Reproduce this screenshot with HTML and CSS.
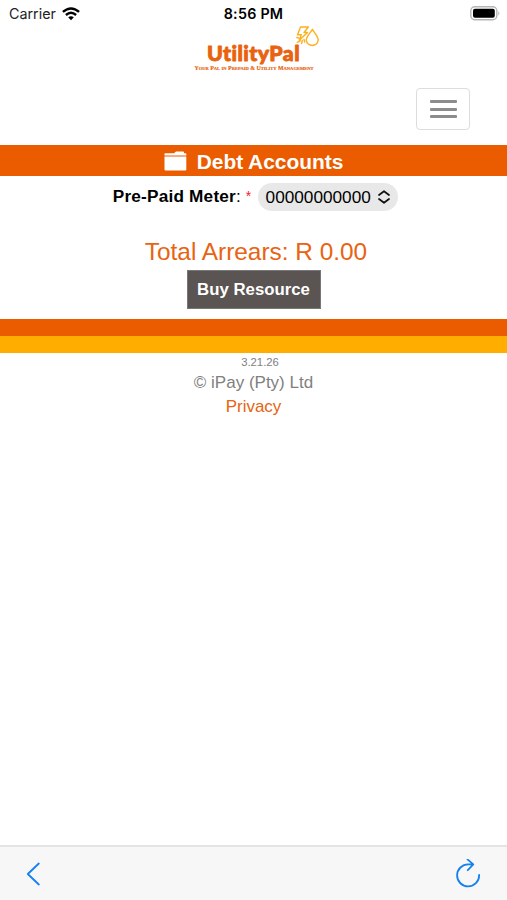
FILE: index.html
```html
<!DOCTYPE html>
<html lang="en">
<head>
<meta charset="utf-8">
<title>UtilityPal - Debt Accounts</title>
<link rel="stylesheet" href="styles.css">
</head>
<body>
<div class="status">
  <div class="carrier"><span>Carrier</span>
    <svg width="18" height="14" viewBox="0 0 18 14" fill="none" stroke="#000" stroke-width="2.4"><path d="M.9 4.9Q9-2 17.1 4.9M3.9 8Q9 3.6 14.1 8"/><path d="M6.2 10.2Q9 8.2 11.8 10.2L9 13.3Z" fill="#000" stroke="none"/></svg>
  </div>
  <div class="time">8:56 PM</div>
  <div class="battery"><svg width="31" height="15" viewBox="0 0 31 15"><rect x=".8" y=".8" width="26" height="13" rx="4" fill="#fff" stroke="#b5b5b5" stroke-width="1.4"/><rect x="3" y="2.8" width="21.8" height="9" rx="2" fill="#000"/><path d="M28.3 5q2.2 2.4 0 4.8z" fill="#b5b5b5"/></svg></div>
</div>
<header class="header">
  <svg class="logo" width="130" height="48" viewBox="190 25 130 48">
    <text class="logo-name" x="207" y="61.3" textLength="93" lengthAdjust="spacingAndGlyphs">UtilityPal</text>
    <text class="logo-tag" x="194.5" y="70" textLength="119" lengthAdjust="spacingAndGlyphs">Your Pal in Prepaid &amp; Utility Management</text>
    <g fill="none" stroke="#fbb01c" stroke-width="1.4" stroke-linejoin="round" stroke-linecap="round">
      <path d="M312.4 29.3C310.3 33 306.3 36.2 306.3 40.2A6 6 0 0 0 318.2 40.2C318.2 36.2 314.4 33 312.4 29.3Z"/>
      <path d="M300.6 27L297.5 34.8H301.3L299.3 40.3L307.5 32.5H304L308.4 27Z"/>
      <path d="M296.8 37.5L299 38M297.2 42.3L300.2 40.8M301.6 43.5L302.2 40.5M304.7 42L304 39.5"/>
    </g>
  </svg>
  <button class="menu" aria-label="Menu"><i></i><i></i><i></i></button>
</header>
<main>
  <h1 class="title">
    <svg width="23" height="20" viewBox="0 0 23 20" fill="#fff"><path d="M.5 4.6V3Q.5 2.2 1.3 2.2H10L12 .5H19Q20 .5 20 1.3V2.2H21.5Q22.3 2.2 22.3 3V4.6Z"/><path d="M.5 5.5H22.3V18.5Q22.3 19.6 21.3 19.6H1.5Q.5 19.6 .5 18.5Z"/></svg>
    <span>Debt Accounts</span>
  </h1>
  <div class="meter">
    <span class="label"><b>Pre-Paid Meter</b>:</span><span class="required">*</span>
    <div class="select"><span>00000000000</span><svg width="14" height="14" viewBox="0 0 14 14" fill="none" stroke="#111" stroke-width="1.7" stroke-linecap="round" stroke-linejoin="round"><path d="M2 5L7 1.2L12 5M2 9L7 12.8L12 9"/></svg></div>
  </div>
  <div class="arrears">Total Arrears: R 0.00</div>
  <button class="buy">Buy Resource</button>
</main>
<footer class="footer">
  <div class="stripe"></div>
  <div class="version">3.21.26</div>
  <div class="copyright">© iPay (Pty) Ltd</div>
  <a class="privacy">Privacy</a>
</footer>
<nav class="toolbar">
  <svg width="14" height="24" viewBox="0 0 14 24" fill="none" stroke="#1580ef" stroke-width="1.8" stroke-linecap="round" stroke-linejoin="round"><path d="M12.8 1.5L1.8 12L12.8 22.5"/></svg>
  <svg width="26" height="30" viewBox="0 0 26 30" fill="none" stroke="#1580ef" stroke-width="1.8" stroke-linecap="round" stroke-linejoin="round"><path d="M17.7 5.4H13.4A11 11 0 1 0 24.1 15.9M12.5 .4L18.3 5.4L12.8 11.2"/></svg>
</nav>
</body>
</html>
```
FILE: styles.css
```css
* { box-sizing: border-box; }
body {
  margin: 0;
  height: 900px;
  display: flex;
  flex-direction: column;
  background: #fff;
  color: #000;
  font-family: "Liberation Sans", Arial, sans-serif;
}
svg { display: block; flex: none; }
button { font-family: inherit; padding: 0; }
.status {
  height: 25px;
  display: grid;
  grid-template-columns: 1fr auto 1fr;
  align-items: center;
  padding: 2px 6px 0 9px;
  font: 14.3px/20px Inter, sans-serif;
}
.carrier { display: flex; align-items: center; gap: 6px; color: #222; }
.time { font-weight: 600; font-size: 14.3px; letter-spacing: .25px; margin-left: -3px; }
.battery { justify-self: end; }
.header {
  height: 120px;
  display: flex;
  flex-direction: column;
}
.logo { margin-left: 190px; }
.logo-name { font: 900 20px Lato, sans-serif; font-variant-ligatures: none; letter-spacing: .4px; fill: #e9620e; stroke: #e9620e; stroke-width: .8px; stroke-linejoin: round; }
.logo-tag { font: bold 5.2px "Liberation Serif", serif; font-variant: small-caps; fill: #e9620e; stroke: #e9620e; stroke-width: .15px; }
.menu {
  width: 54px;
  height: 42px;
  margin: 15px 37px 0 auto;
  border: 1px solid #ddd;
  border-radius: 4px;
  background: #fff;
  display: flex;
  flex-direction: column;
  align-items: center;
  justify-content: center;
  gap: 4.5px;
}
.menu i { width: 27px; height: 3px; border-radius: 1px; background: #8c8c8c; }
main { height: 174px; display: flex; flex-direction: column; align-items: center; }
.title {
  width: 100%;
  height: 31px;
  margin: 0;
  display: flex;
  align-items: center;
  justify-content: center;
  gap: 10px;
  background: #eb5c00;
  color: #fff;
  font-size: 20.9px;
}
.title span { padding-top: 3px; }
.meter {
  height: 28px;
  margin: 7px 0 0 4px;
  display: flex;
  align-items: center;
  font-size: 17.2px;
}
.label { margin-top: -1px; }
.label b { letter-spacing: .2px; }
.required { color: #f0202d; font-size: 14px; margin: -3px 7px 0 5px; }
.select {
  width: 140px;
  height: 28px;
  border-radius: 14px;
  background: #e8e8e8;
  display: flex;
  align-items: center;
  justify-content: center;
  gap: 6px;
}
.arrears { margin-top: 26px; padding-left: 5px; font-size: 24.4px; line-height: 30px; color: #e86312; }
.buy {
  width: 134px;
  height: 39px;
  margin-top: 3px;
  border: 1px solid #777;
  background: #5a5452;
  color: #fff;
  font-size: 16.8px;
  font-weight: bold;
}
.footer { display: flex; flex-direction: column; align-items: center; color: #808080; font-size: 17px; line-height: 24px; }
.stripe { width: 100%; height: 34px; border-top: 17px solid #eb5c00; background: #ffae00; }
.version { margin-left: 13px; font-size: 11.3px; line-height: 19px; }
.copyright { margin-top: -1px; }
.privacy { color: #e86312; }
.toolbar {
  height: 55px;
  margin-top: auto;
  padding: 0 26px;
  display: flex;
  align-items: center;
  justify-content: space-between;
  border-top: 2px solid #e4e4e4;
  background: #f7f7f7;
}
```
